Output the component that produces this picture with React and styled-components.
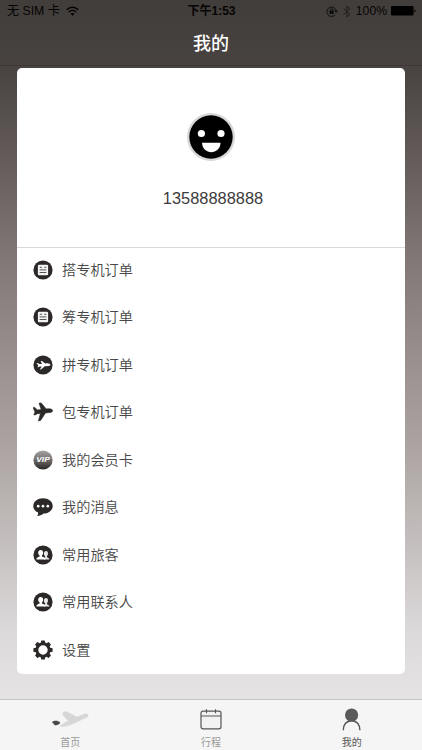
import styled, { createGlobalStyle } from "styled-components";

const DARK = "#2b2827";

const OrderIcon = () => (
  <Icon viewBox="0 0 20 20">
    <circle cx="10" cy="10" r="9.6" fill={DARK} />
    <rect x="4.9" y="4.8" width="10.2" height="10.4" rx="1.2" fill="#f4f4f4" />
    <path
      d="M6.8 7.3h2.2M11.2 7.3h2.2M6.6 9.9h6.8M6.6 12.5h6.8"
      stroke="#45413f"
      strokeWidth="0.9"
    />
  </Icon>
);

const SharedPlaneIcon = () => (
  <Icon viewBox="0 0 20 20">
    <circle cx="10" cy="10" r="9.6" fill={DARK} />
    <path
      d="M7.6 6.1l1.3-.2 3.3 2.6c1.7-.2 3.6-.3 4.8.6.8.8.3 1.7-1 1.8l-4.1.4-3.7 3-1.4.1 1.9-3-1.9.1-1.6.7-.7-.3.8-1.5-1.9-2.3.9-.2 2.3 1.2 2.4-.2z"
      fill="#fff"
    />
  </Icon>
);

const CharterPlaneIcon = () => (
  <Icon viewBox="0 0 20 20">
    <path
      d="M6 1.2 8.2.9l5 6c2.2-.3 4.3-.4 5.8.6 1.4 1.4.3 2.8-1.5 2.900l-5 .5-4.900 7.500-2.200.5 2-7.400-3 .2-2.400 1.400-1.200-.4L2 9.900 0 5.400h1.600l2.900 2.500 3.700-.4z"
      fill={DARK}
      stroke={DARK}
      strokeWidth="0.6"
      strokeLinejoin="round"
    />
  </Icon>
);

const VipIcon = () => (
  <Icon viewBox="0 0 20 20">
    <defs>
      <linearGradient id="vip" x1="0" y1="0" x2="0" y2="1">
        <stop offset="0" stopColor="#aaa5a5" />
        <stop offset="0.5" stopColor="#716c6c" />
        <stop offset="1" stopColor="#292525" />
      </linearGradient>
    </defs>
    <circle cx="10" cy="10" r="9.6" fill="url(#vip)" />
    <text
      x="10"
      y="12.2"
      textAnchor="middle"
      textLength="13.5"
      lengthAdjust="spacingAndGlyphs"
      fontFamily="Liberation Sans, sans-serif"
      fontSize="6.4"
      fontWeight="bold"
      fontStyle="italic"
      fill="#fff"
    >
      VIP
    </text>
  </Icon>
);

const MessageIcon = () => (
  <Icon viewBox="0 0 20 20">
    <path
      d="M10 1.3c5.4 0 9.7 3.2 9.7 7.6s-4.2 7.6-9.2 7.7c-1.6 1.4-3.8 2.4-6.5 2.5 1-1 1.3-2.2 1.1-3.5C2.2 14.3.3 11.9.3 8.9.3 4.5 4.6 1.3 10 1.3z"
      fill={DARK}
    />
    <circle cx="5.2" cy="9.2" r="1.35" fill="#fff" />
    <circle cx="10" cy="9.2" r="1.35" fill="#fff" />
    <circle cx="14.8" cy="9.2" r="1.35" fill="#fff" />
  </Icon>
);

const PeopleIcon = () => (
  <Icon viewBox="0 0 20 20">
    <circle cx="10" cy="10" r="9.6" fill={DARK} />
    <path
      d="M10.7 13.6c.2-.7 1.2-1 1.5-1.4v-.8c-1.8-1.5-1.6-5.4.8-5.4s2.6 3.5.9 5.3v.9c1 .5 2.3.7 2.5 2.2H11z"
      fill="#e9e8e8"
    />
    <path
      d="M3.4 14.5c0-1.7 1.2-2 3.2-2.9v-1C4.3 8.7 5 5 7.7 5s3.4 3.700 1.200 5.600v1c2 .8 3.200 1.200 3.300 2.900z"
      fill="#fff"
    />
  </Icon>
);

const SettingsIcon = () => (
  <Icon viewBox="0 0 20 20">
    <circle cx="10" cy="10" r="6.2" fill="none" stroke={DARK} strokeWidth="3" />
    {[0, 45, 90, 135, 180, 225, 270, 315].map((angle) => (
      <rect
        key={angle}
        x="8"
        y="0.4"
        width="4"
        height="3.4"
        rx="0.7"
        fill={DARK}
        transform={`rotate(${angle} 10 10)`}
      />
    ))}
  </Icon>
);

const MENU = [
  { label: "搭专机订单", icon: OrderIcon },
  { label: "筹专机订单", icon: OrderIcon },
  { label: "拼专机订单", icon: SharedPlaneIcon },
  { label: "包专机订单", icon: CharterPlaneIcon },
  { label: "我的会员卡", icon: VipIcon },
  { label: "我的消息", icon: MessageIcon },
  { label: "常用旅客", icon: PeopleIcon },
  { label: "常用联系人", icon: PeopleIcon },
  { label: "设置", icon: SettingsIcon },
];

const WifiIcon = () => (
  <svg width="13" height="11" viewBox="0 0 13 11" fill="none" stroke="#000">
    <path d="M.8 3.7c3.3-3.3 8.1-3.3 11.4 0" strokeWidth="1.5" />
    <path d="M2.9 6c2.1-2 5.1-2 7.2 0" strokeWidth="1.5" />
    <path d="M6.5 9.8l-2-2c1.2-1 2.8-1 4 0z" fill="#000" stroke="none" />
  </svg>
);

const LockIcon = () => (
  <svg width="12" height="11" viewBox="0 0 12 11" fill="none" stroke="#0b0a0a">
    <path d="M9.2 8.7A4.7 4.7 0 1 1 10.2 5" strokeWidth="0.9" />
    <path d="M8.4 4.8h3.4l-1.7 2z" fill="#0b0a0a" stroke="none" />
    <rect x="3.5" y="4.7" width="4.2" height="3.2" fill="#0b0a0a" stroke="none" />
    <path d="M4.3 5V3.9c0-1.7 2.6-1.7 2.6 0V5" strokeWidth="0.9" />
  </svg>
);

const BluetoothIcon = () => (
  <svg width="8" height="13" viewBox="0 0 8 13" fill="none" stroke="#1f1c1b">
    <path d="M.7 3.5 7 9.3 4 12V1l3 2.7L.7 9.5" strokeWidth="0.9" />
  </svg>
);

const BatteryIcon = () => (
  <svg width="26" height="10" viewBox="0 0 26 10">
    <rect x="1" y="0" width="22.5" height="9.5" rx="1" fill="#000" />
    <path d="M24.3 3.2c1.6.3 1.6 3 0 3.3z" fill="#000" />
  </svg>
);

const HomeIcon = () => (
  <svg width="38" height="18" viewBox="0 0 38 18">
    <path
      d="M9 16.3c2-1.900 5-3.700 8.500-5.300L12 5c-1-2 .6-3.700 3.400-3.300L26 7.100l8-3.100c2.700-.8 4.400 1.700 1.900 3.200L20 14.600c-3 1.400-7.500 2.200-11 1.700z"
      fill="#d6d6d6"
      stroke="#d6d6d6"
      strokeWidth="0.6"
      strokeLinejoin="round"
    />
    <path
      d="M.8 12.3c1.8-2.2 5.8-2.3 8.5.3-1.2 2.8-5.3 3.500-6.300 1.900C2.900 13.400 1.800 13.300.8 12.300z"
      fill="#484848"
    />
  </svg>
);

const TripIcon = () => (
  <svg width="22" height="21" viewBox="0 0 22 21" fill="none" stroke="#555">
    <rect x="1" y="2.2" width="20" height="17.6" rx="2" fill="#f2f2f2" strokeWidth="1.2" />
    <path d="M1 7h20M6.5.3v4M15.5.3v4" strokeWidth="1.1" />
  </svg>
);

const MineIcon = () => (
  <svg width="20" height="23" viewBox="0 0 20 23">
    <path
      d="M1.3 22.3c-.2-5.3 2.9-9.6 8.3-9.6s8.500 4.300 8.300 9.600"
      fill="none"
      stroke="#555"
      strokeWidth="1.4"
    />
    <circle cx="9.6" cy="7" r="6.6" fill="#5a5a5a" />
  </svg>
);

const TABS = [
  { label: "首页", icon: HomeIcon },
  { label: "行程", icon: TripIcon },
  { label: "我的", icon: MineIcon, active: true },
];

const App = () => {
  return (
    <Screen>
      <GlobalStyle />
      <Header>
        <StatusBar>
          <StatusLeft>
            <span>无 SIM 卡</span>
            <WifiIcon />
          </StatusLeft>
          <Clock>下午1:53</Clock>
          <StatusRight>
            <LockIcon />
            <BluetoothIcon />
            <BatteryLevel>100%</BatteryLevel>
            <BatteryIcon />
          </StatusRight>
        </StatusBar>
        <Title>我的</Title>
      </Header>
      <Card>
        <Profile>
          <Avatar viewBox="0 0 48 48">
            <circle cx="24" cy="24" r="24" fill="#d8d8d8" />
            <circle cx="24" cy="24" r="21.7" fill="#000" />
            <circle cx="14.4" cy="20.5" r="3.6" fill="#fff" />
            <circle cx="34" cy="20.5" r="3.6" fill="#fff" />
            <path d="M15 29.8h18.5c-.4 12.6-18 12.6-18.5 0z" fill="#fff" />
          </Avatar>
          <Phone>13588888888</Phone>
        </Profile>
        <Menu>
          {MENU.map(({ label, icon: MenuIcon }) => (
            <MenuItem key={label}>
              <MenuIcon />
              <Label>{label}</Label>
            </MenuItem>
          ))}
        </Menu>
      </Card>
      <TabBar>
        {TABS.map(({ label, icon: TabIcon, active }) => (
          <Tab key={label} $active={active}>
            <TabIconBox>
              <TabIcon />
            </TabIconBox>
            {label}
          </Tab>
        ))}
      </TabBar>
    </Screen>
  );
};

export default App;

const GlobalStyle = createGlobalStyle`
  * {
    box-sizing: border-box;
  }

  body {
    margin: 0;
    font-family: "Liberation Sans", "Noto Sans CJK SC", sans-serif;
  }
`;

const Screen = styled.div`
  display: flex;
  flex-direction: column;

  width: 422px;
  height: 750px;
  overflow: hidden;

  background: linear-gradient(
    #433f3c 0,
    #4a4442 75px,
    #7e7574 250px,
    #958b8a 340px,
    #aaa2a1 440px,
    #c3bebd 540px,
    #dcd9da 630px,
    #e5e3e4 700px
  );
`;

const Header = styled.header`
  flex: none;
  height: 66px;

  background: linear-gradient(#413d3a, #484341);
  border-bottom: 1px solid #3d3835;
`;

const StatusBar = styled.div`
  display: grid;
  grid-template-columns: 1fr auto 1fr;
  align-items: center;

  height: 22px;
  padding: 0 6px 0 7px;

  font-size: 12.2px;
  line-height: 22px;
  color: #050505;
`;

const StatusLeft = styled.div`
  display: flex;
  align-items: center;
  gap: 6px;
`;

const StatusRight = styled.div`
  display: flex;
  align-items: center;
  justify-content: flex-end;
  gap: 5px;
`;

const BatteryLevel = styled.span`
  margin-right: -2px;
`;

const Clock = styled.div`
  font-size: 12px;
  font-weight: bold;
`;

const Title = styled.h1`
  margin: 0;
  padding-top: 1px;

  font-size: 18px;
  font-weight: 500;
  line-height: 42px;
  text-align: center;
  color: white;
`;

const Card = styled.main`
  flex: none;
  height: 606px;
  margin: 2px 17px 0;
  overflow: hidden;

  background-color: white;
  border-radius: 5px;
`;

const Profile = styled.section`
  display: flex;
  flex-direction: column;
  align-items: center;

  height: 180px;
  padding-top: 45px;

  border-bottom: 1px solid #d8d8d8;
`;

const Avatar = styled.svg`
  width: 48px;
  height: 48px;
  margin-right: 1px;
`;

const Phone = styled.div`
  margin-top: 27px;
  padding-left: 4px;

  font-size: 16.4px;
  line-height: 20px;
  color: #3c3c3c;
`;

const Menu = styled.ul`
  margin: -2px 0 0;
  padding: 0;

  list-style-type: none;
`;

const MenuItem = styled.li`
  display: flex;
  align-items: center;
  gap: 9px;

  height: 47.5px;
  padding-left: 16px;
`;

const Label = styled.span`
  padding-bottom: 2px;

  font-size: 14.2px;
  font-weight: 350;
  color: #484848;
`;

const Icon = styled.svg`
  width: 20px;
  height: 20px;
`;

const TabBar = styled.nav`
  display: flex;

  flex: none;
  height: 51px;
  margin-top: auto;

  background-color: #f5f5f5;
  border-top: 1px solid #c6c4c5;
`;

const Tab = styled.div`
  display: flex;
  flex: 1 1 0;
  flex-direction: column;
  align-items: center;

  font-size: 10px;
  line-height: 14px;
  color: ${({ $active }) => ($active ? "#555" : "#999")};
`;

const TabIconBox = styled.div`
  display: flex;
  align-items: center;

  height: 37px;
  padding-top: 2px;
`;
